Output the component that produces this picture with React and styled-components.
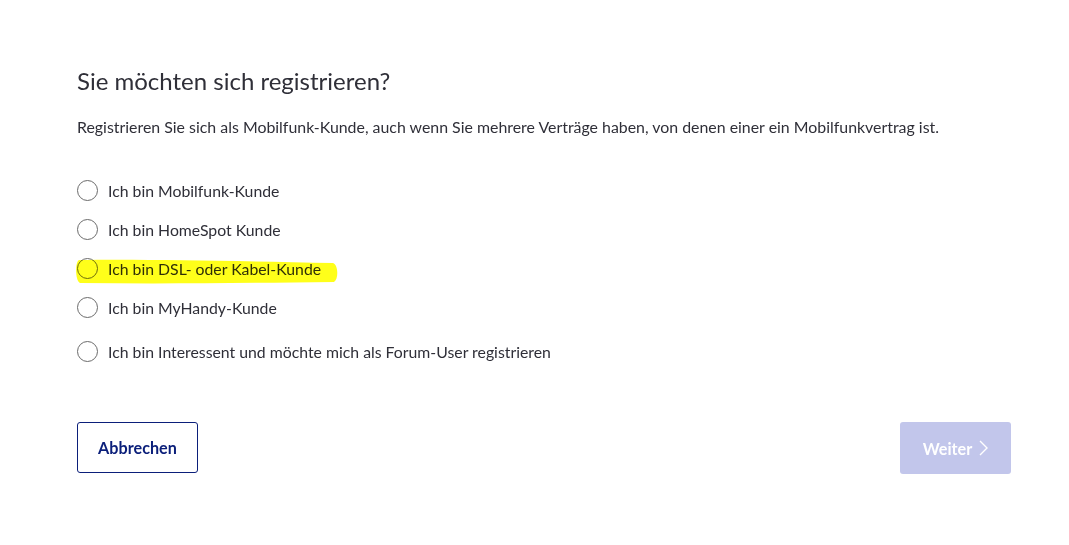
import React from "react";
import styled, { createGlobalStyle } from "styled-components";

const Global = createGlobalStyle`
  html, body {
    margin: 0;
    padding: 0;
    background: #ffffff;
  }
  body {
    font-family: Lato, "Open Sans", "Liberation Sans", sans-serif;
    color: #2f2f38;
  }
`;

const Page = styled.div`
  width: 1069px;
  height: 545px;
  box-sizing: border-box;
  padding: 66px 58px 0 77px;
`;

const Title = styled.h1`
  margin: 0;
  font-size: 24px;
  font-weight: 400;
  line-height: 30px;
  color: #2f2f38;
`;

const Lead = styled.p`
  margin: 21px 0 0;
  font-size: 15.9px;
  line-height: 20px;
`;

const Options = styled.div`
  display: flex;
  flex-direction: column;
  margin-top: 43px;
`;

const Option = styled.label`
  position: relative;
  display: flex;
  align-items: center;
  gap: 10px;
  height: 21px;
  margin-bottom: ${(p) => (p.$gap !== undefined ? p.$gap : 18)}px;
  font-size: 15.8px;
  cursor: pointer;
`;

const Circle = styled.span`
  width: 21px;
  height: 21px;
  box-sizing: border-box;
  border: 1.5px solid #6b6b6b;
  border-radius: 50%;
  flex-shrink: 0;
`;

const Text = styled.span`
  position: relative;
`;

const Marker = styled.svg`
  position: absolute;
  left: -3px;
  top: -1px;
  mix-blend-mode: multiply;
  pointer-events: none;
`;

const Actions = styled.div`
  display: flex;
  justify-content: space-between;
  margin-top: 60px;
`;

const Cancel = styled.button`
  width: 121px;
  height: 51px;
  border: 1px solid #0b1f7a;
  border-radius: 3px;
  background: #ffffff;
  color: #0b1f7a;
  font-family: inherit;
  font-size: 16.2px;
  font-weight: 700;
  cursor: pointer;
`;

const Next = styled.button`
  display: flex;
  align-items: center;
  justify-content: center;
  gap: 7px;
  width: 111px;
  height: 52px;
  border: none;
  border-radius: 3px;
  background: #c2c6eb;
  color: #ffffff;
  font-family: inherit;
  font-size: 16.2px;
  font-weight: 700;
`;

const options = [
  { label: "Ich bin Mobilfunk-Kunde" },
  { label: "Ich bin HomeSpot Kunde" },
  { label: "Ich bin DSL- oder Kabel-Kunde", marked: true },
  { label: "Ich bin MyHandy-Kunde", gap: 23 },
  { label: "Ich bin Interessent und möchte mich als Forum-User registrieren", gap: 0 },
];

export default function App() {
  return (
    <Page>
      <Global />
      <Title>Sie möchten sich registrieren?</Title>
      <Lead>
        Registrieren Sie sich als Mobilfunk-Kunde, auch wenn Sie mehrere Verträge haben, von denen einer ein
        Mobilfunkvertrag ist.
      </Lead>
      <Options>
        {options.map((o) => (
          <Option key={o.label} $gap={o.gap}>
            <Circle />
            <Text>{o.label}</Text>
            {o.marked && (
              <Marker width="266" height="30" viewBox="0 0 266 30">
                <path
                  d="M5 3 C70 2 160 4 259 6 C264 7 265 22 260 25 C170 26 90 27 6 26 C1 24 1 5 5 3 Z"
                  fill="#ffff1a"
                />
              </Marker>
            )}
          </Option>
        ))}
      </Options>
      <Actions>
        <Cancel>Abbrechen</Cancel>
        <Next>
          Weiter
          <svg width="9" height="16" viewBox="0 0 9 16">
            <path d="M1 1 L8 8 L1 15" fill="none" stroke="#ffffff" strokeWidth="1.4" />
          </svg>
        </Next>
      </Actions>
    </Page>
  );
}
